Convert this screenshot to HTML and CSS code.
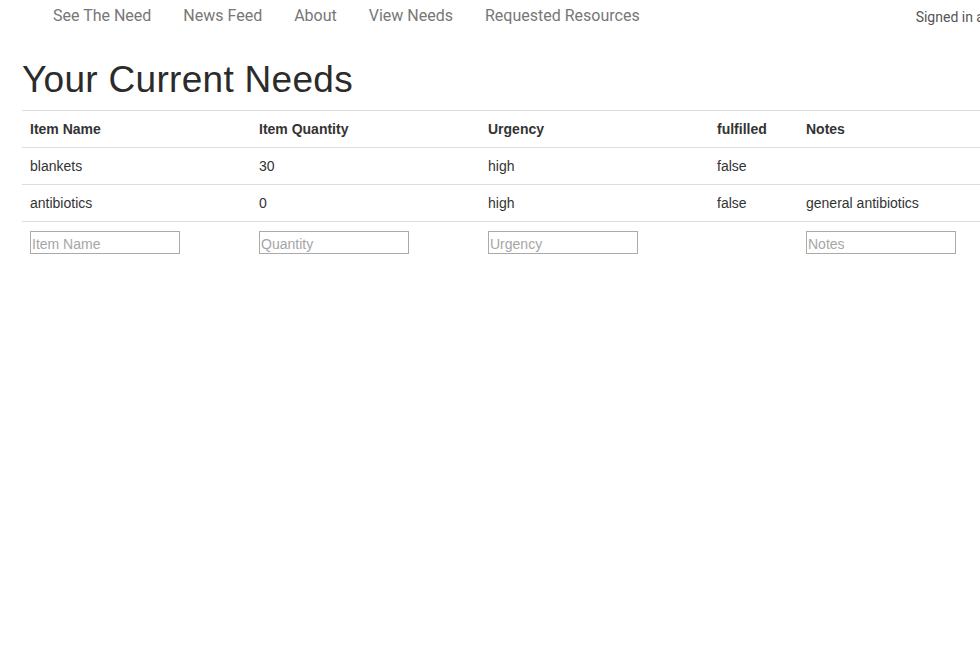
FILE: index.html
```html
<!DOCTYPE html>
<html lang="en">
<head>
<meta charset="utf-8">
<title>Your Current Needs</title>
<link rel="stylesheet" href="styles.css">
</head>
<body>
<div class="page">
  <nav class="navbar">
    <ul class="nav-links">
      <li><a href="#">See The Need</a></li>
      <li><a href="#">News Feed</a></li>
      <li><a href="#">About</a></li>
      <li><a href="#">View Needs</a></li>
      <li><a href="#">Requested Resources</a></li>
    </ul>
    <div class="signed-in">Signed in as admin</div>
  </nav>
  <main class="content">
    <h1 class="title">Your Current Needs</h1>
    <table class="needs">
      <colgroup>
        <col class="c-name"><col class="c-qty"><col class="c-urg"><col class="c-ful"><col class="c-notes">
      </colgroup>
      <thead>
        <tr><th>Item Name</th><th>Item Quantity</th><th>Urgency</th><th>fulfilled</th><th>Notes</th></tr>
      </thead>
      <tbody>
        <tr><td>blankets</td><td>30</td><td>high</td><td>false</td><td></td></tr>
        <tr><td>antibiotics</td><td>0</td><td>high</td><td>false</td><td>general antibiotics</td></tr>
        <tr class="input-row">
          <td><input type="text" placeholder="Item Name"></td>
          <td><input type="text" placeholder="Quantity"></td>
          <td><input type="text" placeholder="Urgency"></td>
          <td></td>
          <td><input type="text" placeholder="Notes"></td>
        </tr>
      </tbody>
    </table>
  </main>
</div>
</body>
</html>
```
FILE: styles.css
```css
html, body {
  margin: 0;
  padding: 0;
  overflow: hidden;
  background: #fff;
}
.page {
  width: 1200px;
  font-family: "Liberation Sans", Arial, sans-serif;
  color: #333;
}
.navbar {
  display: flex;
  align-items: flex-start;
  height: 40px;
  padding-left: 37px;
  box-sizing: border-box;
}
.nav-links {
  display: flex;
  list-style: none;
  margin: 0;
  padding: 0;
}
.nav-links a {
  display: block;
  padding: 6px 16px 0;
  line-height: 20px;
  font-family: Roboto, "Liberation Sans", sans-serif;
  font-size: 16px;
  color: #777;
  text-decoration: none;
}
.signed-in {
  margin-left: 260px;
  padding-top: 7px;
  line-height: 20px;
  font-family: Roboto, "Liberation Sans", sans-serif;
  font-size: 14px;
  color: #555;
  white-space: nowrap;
}
.content {
  padding-left: 22px;
}
.title {
  margin: 20px 0 10px;
  font-size: 37px;
  line-height: 40px;
  letter-spacing: 0.3px;
  font-weight: normal;
  color: #2b2b2b;
}
.needs {
  width: 1146px;
  border-collapse: collapse;
  font-size: 14px;
  line-height: 20px;
}
.c-name, .c-qty, .c-urg { width: 229px; }
.c-ful { width: 89px; }
.needs th, .needs td {
  padding: 8px;
  text-align: left;
  vertical-align: top;
  border-top: 1px solid #ddd;
}
.needs th {
  font-weight: bold;
}
.input-row td {
  padding-top: 9px;
}
.input-row input {
  display: block;
  box-sizing: border-box;
  width: 150px;
  height: 23px;
  margin: 0;
  padding: 2px 1px 0;
  border: 1px solid #aaa;
  font-family: "Liberation Sans", Arial, sans-serif;
  font-size: 14px;
  color: #333;
}
.input-row input::placeholder {
  color: #a6a6a6;
}
```
